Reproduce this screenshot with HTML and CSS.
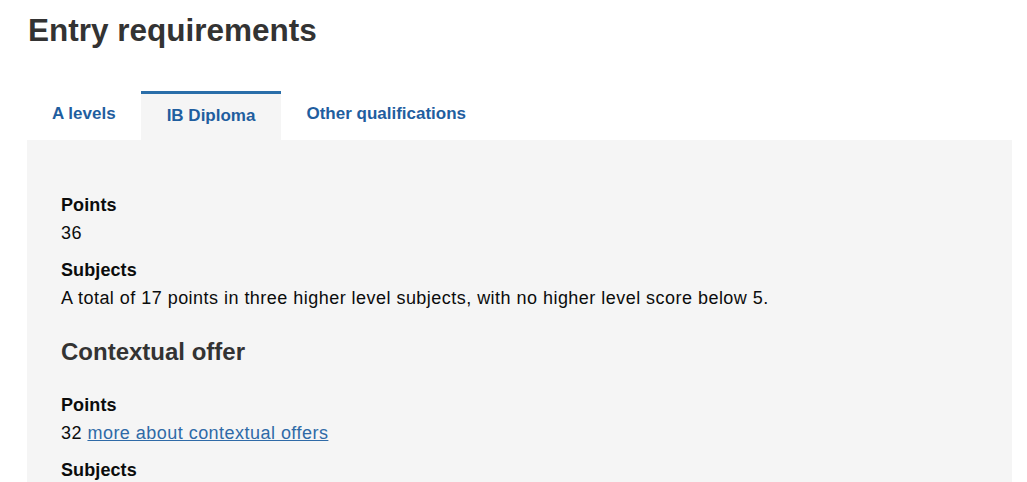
FILE: index.html
```html
<!DOCTYPE html>
<html lang="en">
<head>
<meta charset="utf-8">
<title>Entry requirements</title>
<link rel="stylesheet" href="styles.css">
</head>
<body>
<main class="page">
  <h1 class="title">Entry requirements</h1>
  <div class="tabs">
    <a class="tab" href="#">A levels</a>
    <a class="tab tab-active" href="#">IB Diploma</a>
    <a class="tab" href="#">Other qualifications</a>
  </div>
  <section class="panel">
    <dl class="reqs">
      <dt>Points</dt>
      <dd>36</dd>
      <dt>Subjects</dt>
      <dd>A total of 17 points in three higher level subjects, with no higher level score below 5.</dd>
    </dl>
    <h3 class="sub">Contextual offer</h3>
    <dl class="reqs">
      <dt>Points</dt>
      <dd>32 <a class="link" href="#">more about contextual offers</a></dd>
      <dt>Subjects</dt>
      <dd>A total of 15 points in three higher level subjects, with no higher level score below 5.</dd>
    </dl>
  </section>
</main>
</body>
</html>
```
FILE: styles.css
```css
html, body {
  margin: 0;
  padding: 0;
  background: #ffffff;
}
body {
  font-family: "Liberation Sans", Arial, sans-serif;
  color: #0b0c0c;
}
.page {
  padding: 0 15px 0 27px;
}
.title {
  margin: 12px 0 0 1px;
  font-size: 31.5px;
  line-height: 36px;
  font-weight: bold;
  color: #333333;
}
.tabs {
  display: flex;
  align-items: flex-end;
  margin-top: 43px;
}
.tab {
  display: block;
  padding: 0 25px 16px;
  font-size: 17px;
  line-height: 20px;
  font-weight: bold;
  color: #1f5e9f;
  text-decoration: none;
}
.tab-active {
  border-top: 3px solid #2a6ea9;
  background: #f5f5f5;
  padding: 12px 26px 14px;
}
.panel {
  background: #f5f5f5;
  padding: 51px 34px 40px;
}
.reqs {
  margin: 0;
}
.reqs dt {
  font-size: 18px;
  line-height: 28px;
  font-weight: bold;
  letter-spacing: 0.1px;
}
.reqs dd {
  margin: 0 0 9px;
  font-size: 18px;
  line-height: 28px;
  letter-spacing: 0.47px;
}
.sub {
  margin: 25px 0 24px;
  font-size: 24px;
  line-height: 30px;
  font-weight: bold;
  color: #333333;
}
.link {
  color: #2f6aa7;
  text-decoration: underline;
}
```
